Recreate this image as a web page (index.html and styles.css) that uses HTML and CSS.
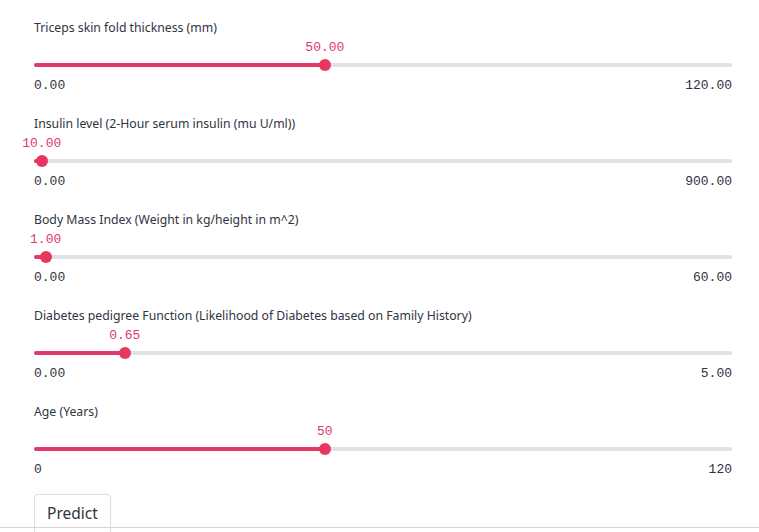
FILE: index.html
```html
<!DOCTYPE html>
<html>
<head>
<meta charset="utf-8">
<link rel="stylesheet" href="styles.css">
</head>
<body>
<main class="page">
  <section class="block">
    <div class="label">Triceps skin fold thickness (mm)</div>
    <div class="slider">
      <div class="value" style="left:41.67%">50.00</div>
      <div class="track"><div class="fill" style="width:41.67%"></div></div>
      <div class="thumb" style="left:41.67%"></div>
    </div>
    <div class="ticks"><span>0.00</span><span>120.00</span></div>
  </section>
  <section class="block">
    <div class="label">Insulin level (2-Hour serum insulin (mu U/ml))</div>
    <div class="slider">
      <div class="value" style="left:1.11%">10.00</div>
      <div class="track"><div class="fill" style="width:1.11%"></div></div>
      <div class="thumb" style="left:1.11%"></div>
    </div>
    <div class="ticks"><span>0.00</span><span>900.00</span></div>
  </section>
  <section class="block">
    <div class="label">Body Mass Index (Weight in kg/height in m^2)</div>
    <div class="slider">
      <div class="value" style="left:1.67%">1.00</div>
      <div class="track"><div class="fill" style="width:1.67%"></div></div>
      <div class="thumb" style="left:1.67%"></div>
    </div>
    <div class="ticks"><span>0.00</span><span>60.00</span></div>
  </section>
  <section class="block">
    <div class="label">Diabetes pedigree Function (Likelihood of Diabetes based on Family History)</div>
    <div class="slider">
      <div class="value" style="left:13%">0.65</div>
      <div class="track"><div class="fill" style="width:13%"></div></div>
      <div class="thumb" style="left:13%"></div>
    </div>
    <div class="ticks"><span>0.00</span><span>5.00</span></div>
  </section>
  <section class="block">
    <div class="label">Age (Years)</div>
    <div class="slider">
      <div class="value" style="left:41.67%">50</div>
      <div class="track"><div class="fill" style="width:41.67%"></div></div>
      <div class="thumb" style="left:41.67%"></div>
    </div>
    <div class="ticks"><span>0</span><span>120</span></div>
  </section>
  <button class="btn">Predict</button>
</main>
<div class="frame-edge"></div>
</body>
</html>
```
FILE: styles.css
```css
html, body {
  margin: 0;
  padding: 0;
  background: #ffffff;
  height: 532px;
  overflow: hidden;
}
.page {
  width: 698px;
  padding: 18px 0 0 34px;
  display: flex;
  flex-direction: column;
  align-items: flex-start;
  font-family: "Noto Sans", "Open Sans", sans-serif;
  color: #31333f;
}
.block {
  width: 698px;
  margin-bottom: 20px;
}
.label {
  height: 20px;
  line-height: 20px;
  font-size: 12.25px;
  color: #31333f;
}
.slider {
  position: relative;
  height: 34px;
}
.value {
  position: absolute;
  top: 2px;
  line-height: 16px;
  transform: translateX(-50%);
  font-family: "Liberation Mono", monospace;
  font-size: 13px;
  color: #e0386a;
  white-space: nowrap;
}
.track {
  position: absolute;
  left: 0;
  right: 0;
  top: 25px;
  height: 4px;
  border-radius: 2px;
  background: #dfe2e8;
  overflow: hidden;
}
.fill {
  height: 100%;
  background: #e23a68;
}
.thumb {
  position: absolute;
  top: 21px;
  width: 12px;
  height: 12px;
  margin-left: -6px;
  border-radius: 50%;
  background: #e8375f;
}
.ticks {
  margin-top: 6px;
  display: flex;
  justify-content: space-between;
  line-height: 16px;
  font-family: "Liberation Mono", monospace;
  font-size: 13px;
  color: #31333f;
}
.btn {
  margin-top: -4px;
  height: 42px;
  padding: 0 12px;
  font-family: "Noto Sans", "Open Sans", sans-serif;
  font-size: 15.5px;
  color: #31333f;
  background: #ffffff;
  border: 1px solid #dcdde0;
  border-radius: 4px;
  display: flex;
  align-items: flex-start;
  padding-top: 7px;
}
.frame-edge {
  position: fixed;
  left: 0;
  right: 0;
  bottom: 4px;
  height: 1px;
  background: #d4d4d4;
}
```
